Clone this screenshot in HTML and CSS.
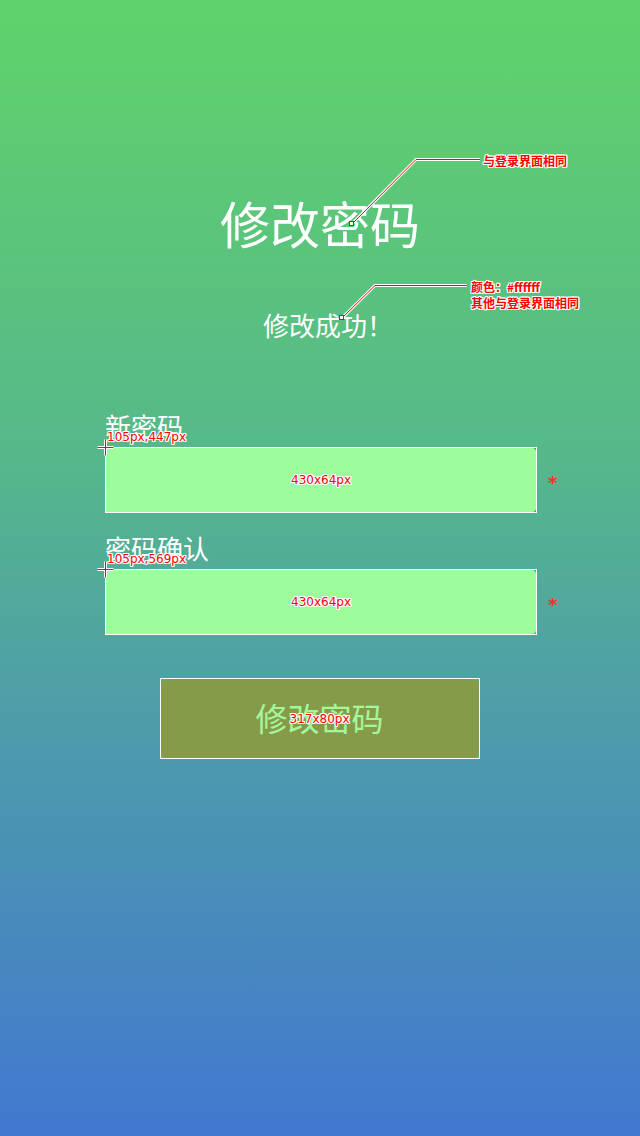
FILE: index.html
```html
<!DOCTYPE html>
<html lang="zh-CN">
<head>
<meta charset="utf-8">
<title>修改密码</title>
<link rel="stylesheet" href="styles.css">
</head>
<body>
<div class="screen">
  <h1 class="title">修改密码</h1>
  <p class="status">修改成功！</p>

  <form class="form">
    <div class="field">
      <label class="field-label">新密码</label>
      <div class="input-row">
        <div class="input">
          <div class="input-fill"><span class="dim">430x64px</span></div>
          <svg class="cross" width="22" height="22" viewBox="0 0 22 22">
            <path d="M2.5 10.5H18.5M10.5 2.5V18.5" stroke="#fff" stroke-width="3"/>
            <path d="M2.5 10.5H18.5M10.5 2.5V18.5" stroke="#f00" stroke-width="1"/>
          </svg>
          <span class="coord">105px,447px</span>
        </div>
        <span class="req">*</span>
      </div>
    </div>
    <div class="field">
      <label class="field-label">密码确认</label>
      <div class="input-row">
        <div class="input">
          <div class="input-fill"><span class="dim">430x64px</span></div>
          <svg class="cross" width="22" height="22" viewBox="0 0 22 22">
            <path d="M2.5 10.5H18.5M10.5 2.5V18.5" stroke="#fff" stroke-width="3"/>
            <path d="M2.5 10.5H18.5M10.5 2.5V18.5" stroke="#f00" stroke-width="1"/>
          </svg>
          <span class="coord">105px,569px</span>
        </div>
        <span class="req">*</span>
      </div>
    </div>
  </form>

  <div class="actions">
    <div class="btn">
      <div class="btn-fill">修改密码</div>
      <span class="dim dim-over">317x80px</span>
    </div>
  </div>

  <svg class="leaders" width="640" height="1136" viewBox="0 0 640 1136">
    <polyline points="352,224 416,159.5 480,159.5" fill="none" stroke="#fff" stroke-width="3"/>
    <polyline points="352,224 416,159.5 480,159.5" fill="none" stroke="#f00" stroke-width="1"/>
    <rect x="349.5" y="221.5" width="4" height="4" fill="#fff" stroke="#f00" stroke-width="1"/>
    <polyline points="342,318 375,285.5 467,285.5" fill="none" stroke="#fff" stroke-width="3"/>
    <polyline points="342,318 375,285.5 467,285.5" fill="none" stroke="#f00" stroke-width="1"/>
    <rect x="339.5" y="315.5" width="4" height="4" fill="#fff" stroke="#f00" stroke-width="1"/>
  </svg>
  <div class="note note-title">与登录界面相同</div>
  <div class="note note-status">颜色：#ffffff<br>其他与登录界面相同</div>
</div>
</body>
</html>
```

FILE: styles.css
```css
* {
  box-sizing: border-box;
}

html,
body {
  margin: 0;
  padding: 0;
}

body {
  width: 640px;
  height: 1136px;
  overflow: hidden;
  background: linear-gradient(180deg, #60d36a 0%, #56b88a 40%, #4e9ea8 62%, #4278d0 100%);
  font-family: "Noto Sans CJK SC", "Noto Sans", sans-serif;
}

.screen {
  position: relative;
  height: 1136px;
  padding-top: 197px;
  display: flex;
  flex-direction: column;
}

.title {
  margin: 0;
  font-size: 50px;
  line-height: 50px;
  font-weight: 400;
  color: #ffffff;
  text-align: center;
}

.status {
  margin: 65px 0 0;
  padding-left: 16px;
  font-size: 26px;
  line-height: 26px;
  font-weight: 400;
  color: #ffffff;
  text-align: center;
}

.form {
  margin: 75px 0 0;
  padding-left: 105px;
  display: flex;
  flex-direction: column;
  gap: 22px;
}

.field-label {
  display: block;
  font-size: 26px;
  line-height: 26px;
  font-weight: 400;
  color: #ffffff;
  margin-bottom: 8px;
}

.input-row {
  display: flex;
  align-items: center;
  gap: 11px;
}

.input {
  position: relative;
  width: 432px;
  height: 66px;
  border: 1px solid #ffffff;
  background: #3aa85e;
}

.input-fill {
  height: 100%;
  background: #9cfd9a;
  border-radius: 0 4px 4px 0;
  display: flex;
  align-items: center;
  justify-content: center;
}

.dim {
  font-family: "DejaVu Sans", sans-serif;
  font-size: 12px;
  line-height: 14px;
  color: #ff0000;
  text-shadow: 1px 0 0 #fff, -1px 0 0 #fff, 0 1px 0 #fff, 0 -1px 0 #fff,
    1px 1px 0 #fff, -1px -1px 0 #fff, 1px -1px 0 #fff, -1px 1px 0 #fff;
}

.cross {
  position: absolute;
  left: -11px;
  top: -11px;
}

.coord {
  position: absolute;
  left: 1px;
  top: -18px;
  font-family: "DejaVu Sans", sans-serif;
  font-size: 12px;
  line-height: 14px;
  color: #ff0000;
  white-space: nowrap;
  text-shadow: 1px 0 0 #fff, -1px 0 0 #fff, 0 1px 0 #fff, 0 -1px 0 #fff,
    1px 1px 0 #fff, -1px -1px 0 #fff, 1px -1px 0 #fff, -1px 1px 0 #fff;
}

.req {
  font-family: "DejaVu Sans", sans-serif;
  font-size: 18px;
  line-height: 18px;
  font-weight: 700;
  color: #ff2a2a;
  transform: translateY(3px);
}

.actions {
  margin-top: 43px;
  padding-right: 1px;
  display: flex;
  justify-content: center;
}

.btn {
  position: relative;
  width: 320px;
  height: 81px;
  border: 1px solid #ffffff;
  background: #3fbf6c;
}

.btn-fill {
  height: 100%;
  background: #869b4a;
  border-radius: 6px;
  display: flex;
  align-items: center;
  justify-content: center;
  font-size: 32px;
  font-weight: 400;
  color: #a3f79d;
  padding-bottom: 3px;
}

.dim-over {
  position: absolute;
  left: 0;
  right: 0;
  top: 33px;
  text-align: center;
}

.leaders {
  position: absolute;
  left: 0;
  top: 0;
  pointer-events: none;
}

.note {
  position: absolute;
  font-size: 12px;
  line-height: 16px;
  font-weight: 700;
  color: #ff0000;
  white-space: nowrap;
  text-shadow: 1px 0 0 #fff, -1px 0 0 #fff, 0 1px 0 #fff, 0 -1px 0 #fff,
    1px 1px 0 #fff, -1px -1px 0 #fff, 1px -1px 0 #fff, -1px 1px 0 #fff;
}

.note-title {
  left: 483px;
  top: 153px;
}

.note-status {
  left: 471px;
  top: 279px;
}
```
